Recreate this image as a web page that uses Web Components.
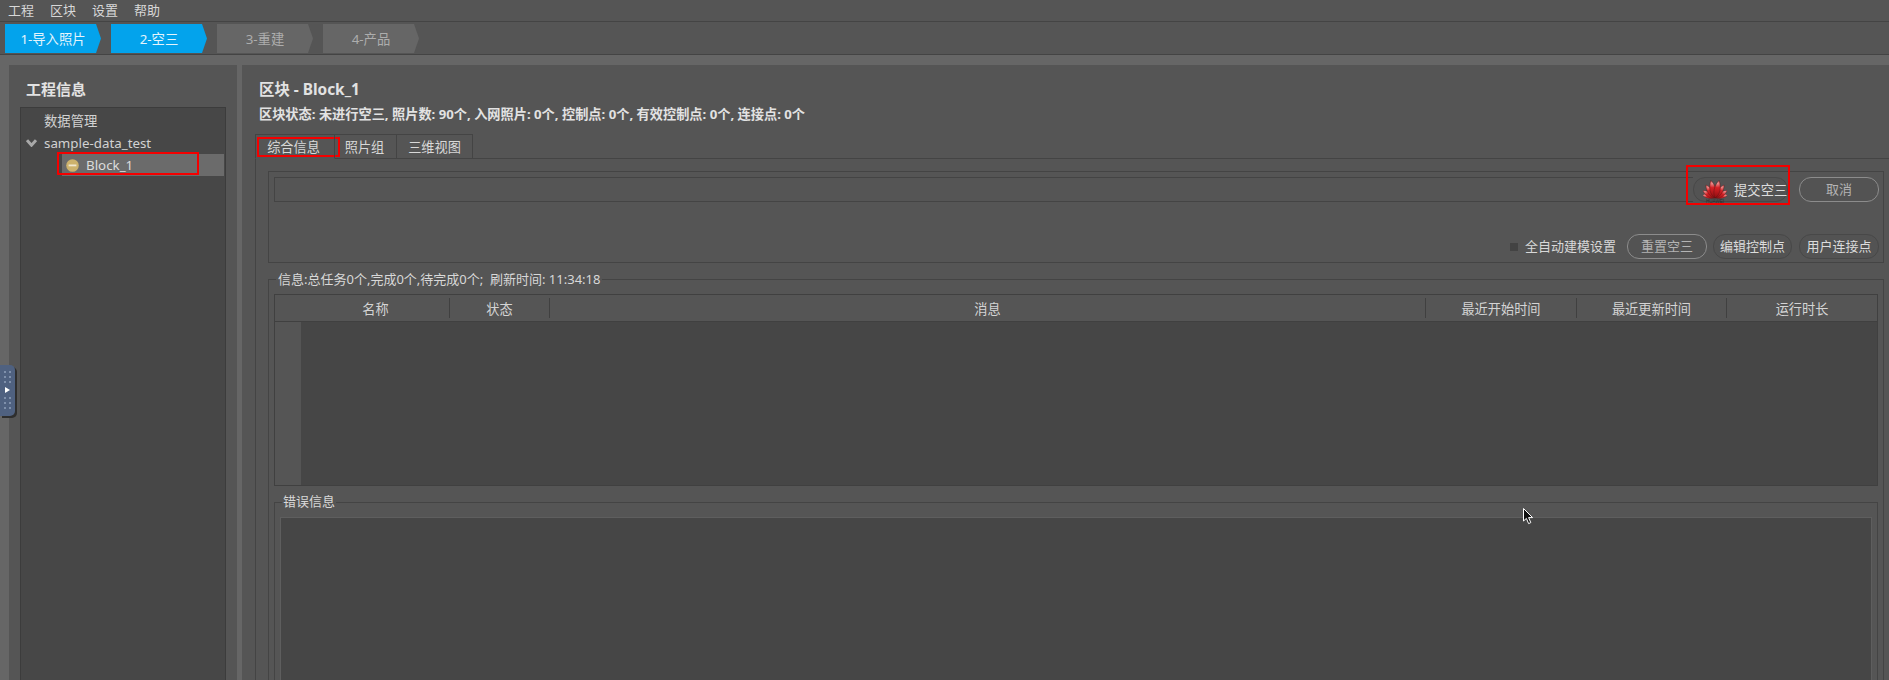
<!DOCTYPE html>
<html lang="zh-CN">
<head>
<meta charset="utf-8">
<title>工程</title>
<style>
  html, body { margin: 0; height: 100%; overflow: hidden; background: #666; }
  body { font: 13px/1.2 "Noto Sans", "Noto Sans CJK SC", sans-serif; color: #d6d6d6; }
</style>
</head>
<body>
<app-shell>
  <menu-bar>
    <span>工程</span><span>区块</span><span>设置</span><span>帮助</span>
  </menu-bar>
  <step-bar>
    <step-item active>1-导入照片</step-item>
    <step-item active>2-空三</step-item>
    <step-item>3-重建</step-item>
    <step-item>4-产品</step-item>
  </step-bar>
  <main-area>
    <side-panel>
      <tree-row>数据管理</tree-row>
      <tree-row expanded>sample-data_test</tree-row>
      <tree-row block selected>Block_1</tree-row>
    </side-panel>
    <block-panel>
      <tab-view>
        <task-box></task-box>
        <group-box label="信息:总任务0个,完成0个,待完成0个;&nbsp; 刷新时间: 11:34:18">
          <task-table></task-table>
          <group-box class="errors" label="错误信息" inner>
            <dark-box></dark-box>
          </group-box>
        </group-box>
      </tab-view>
    </block-panel>
  </main-area>
  <red-mark style="left:57px;top:152px;width:142px;height:23px"></red-mark>
  <red-mark style="left:257px;top:137px;width:83px;height:20px"></red-mark>
  <red-mark style="left:1686px;top:165px;width:104px;height:40px"></red-mark>
  <dock-handle></dock-handle>
  <mouse-cursor></mouse-cursor>
</app-shell>

<script>
class AppShell extends HTMLElement {
  constructor() {
    super();
    this.attachShadow({ mode: 'open' }).innerHTML = `
      <style>
        :host {
          display: flex;
          flex-direction: column;
          position: relative;
          width: 1889px;
          height: 680px;
          overflow: hidden;
          background: #666;
        }
      </style>
      <slot></slot>
    `;
  }
}

class MenuBar extends HTMLElement {
  constructor() {
    super();
    this.attachShadow({ mode: 'open' }).innerHTML = `
      <style>
        :host {
          display: flex;
          align-items: center;
          gap: 16px;
          flex: none;
          height: 21px;
          padding-left: 8px;
          background: #555;
          border-bottom: 1px solid #444;
          color: #d8d8d8;
        }
      </style>
      <slot></slot>
    `;
  }
}

class StepBar extends HTMLElement {
  constructor() {
    super();
    this.attachShadow({ mode: 'open' }).innerHTML = `
      <style>
        :host {
          display: flex;
          gap: 10px;
          flex: none;
          height: 33px;
          padding: 2px 0 0 5px;
          box-sizing: border-box;
          background: #555;
          border-bottom: 1px solid #444;
        }
      </style>
      <slot></slot>
    `;
  }
}

class StepItem extends HTMLElement {
  constructor() {
    super();
    this.attachShadow({ mode: 'open' }).innerHTML = `
      <style>
        :host {
          display: flex;
          align-items: center;
          justify-content: center;
          box-sizing: border-box;
          width: 96px;
          height: 29px;
          padding-top: 1px;
          font-size: 13.33px;
          background: #666;
          color: #adadad;
          clip-path: polygon(0 0, 91px 0, 96px 14.5px, 91px 29px, 0 29px);
        }
        :host([active]) {
          background: #03a3ec;
          color: #e4f4fc;
        }
      </style>
      <slot></slot>
    `;
  }
}

class MainArea extends HTMLElement {
  constructor() {
    super();
    this.attachShadow({ mode: 'open' }).innerHTML = `
      <style>
        :host {
          display: flex;
          flex: 1;
          min-height: 0;
          gap: 5px;
          padding: 10px 0 0 9px;
        }
      </style>
      <slot></slot>
    `;
  }
}

class SidePanel extends HTMLElement {
  constructor() {
    super();
    this.attachShadow({ mode: 'open' }).innerHTML = `
      <style>
        :host {
          display: flex;
          flex-direction: column;
          flex: none;
          width: 228px;
          box-sizing: border-box;
          padding: 13px 11px 0;
          background: #555;
        }
        h2 {
          margin: 0 0 7px 6px;
          font-size: 15px;
          line-height: 22px;
          font-weight: 700;
          color: #e2e2e2;
        }
        #tree {
          flex: 1;
          padding-top: 2px;
          background: #474747;
          border: 1px solid #3c3c3c;
          border-bottom: 0;
        }
      </style>
      <h2>工程信息</h2>
      <div id="tree"><slot></slot></div>
    `;
  }
}

class TreeRow extends HTMLElement {
  constructor() {
    super();
    const arrow = this.hasAttribute('expanded')
      ? `<svg width="11" height="8" viewBox="0 0 11 8"><path d="M1 1.2 L5.5 6.2 L10 1.2" fill="none" stroke="#a8a8a8" stroke-width="3"/></svg>`
      : '';
    const status = this.hasAttribute('block')
      ? `<svg width="13" height="13" viewBox="0 0 13 13"><circle cx="6.5" cy="6.5" r="6.3" fill="#cdb26c"/><rect x="2.6" y="5.5" width="7.8" height="1.8" fill="#f1e8cf"/></svg>`
      : '';
    this.attachShadow({ mode: 'open' }).innerHTML = `
      <style>
        :host {
          display: flex;
          align-items: center;
          height: 22px;
          padding-left: 23px;
          font-size: 13.33px;
          color: #d2d2d2;
        }
        :host([expanded]) { padding-left: 5px; }
        #arrow { display: flex; width: 18px; }
        #text { margin-top: -1px; }
        :host([block]) {
          margin-left: 41px;
          padding-left: 4px;
          gap: 7px;
          margin-right: 1px;
          background: #6b6b6b;
          color: #dcdcdc;
        }
        svg { display: block; flex: none; }
      </style>
      ${arrow ? `<span id="arrow">${arrow}</span>` : ''}${status}<span id="text"><slot></slot></span>
    `;
  }
}

class BlockPanel extends HTMLElement {
  constructor() {
    super();
    this.attachShadow({ mode: 'open' }).innerHTML = `
      <style>
        :host {
          display: flex;
          flex-direction: column;
          flex: 1;
          min-width: 0;
          box-sizing: border-box;
          padding: 14px 0 0 13px;
          background: #555;
        }
        h2 {
          margin: 0 0 2px 4px;
          font-size: 15.4px;
          line-height: 22px;
          color: #e2e2e2;
        }
        p {
          margin: 0 0 9px 4px;
          font-size: 13.2px;
          line-height: 22px;
          font-weight: 700;
          color: #e2e2e2;
          white-space: nowrap;
        }
      </style>
      <h2>区块 - Block_1</h2>
      <p>区块状态: 未进行空三, 照片数: 90个, 入网照片: 0个, 控制点: 0个, 有效控制点: 0个, 连接点: 0个</p>
      <slot></slot>
    `;
  }
}

class TabView extends HTMLElement {
  constructor() {
    super();
    this.attachShadow({ mode: 'open' }).innerHTML = `
      <style>
        :host {
          display: flex;
          flex-direction: column;
          flex: 1;
          min-height: 0;
        }
        #tabs { display: flex; height: 25px; flex: none; position: relative; z-index: 1; }
        .tab {
          display: flex;
          align-items: center;
          justify-content: center;
          box-sizing: border-box;
          height: 25px;
          padding-top: 3px;
          font-size: 13.2px;
          border: 1px solid #444;
          border-left: 0;
          border-bottom: 1px solid #444;
          color: #d8d8d8;
        }
        .tab.first {
          width: 80px;
          padding-right: 3px;
          border-left: 1px solid #444;
          border-bottom-color: #555;
        }
        #pane {
          flex: 1;
          min-height: 0;
          margin-top: -1px;
          padding: 12px 0 0 12px;
          padding-right: 5px;
          border-top: 1px solid #444;
          border-left: 1px solid #444;
        }
      </style>
      <div id="tabs">
        <div class="tab first">综合信息</div>
        <div class="tab" style="width:62px;padding-right:2px">照片组</div>
        <div class="tab" style="width:76px">三维视图</div>
      </div>
      <div id="pane"><slot></slot></div>
    `;
  }
}

class TaskBox extends HTMLElement {
  constructor() {
    super();
    this.attachShadow({ mode: 'open' }).innerHTML = `
      <style>
        :host {
          display: flex;
          flex-direction: column;
          justify-content: space-between;
          box-sizing: border-box;
          height: 92px;
          margin-bottom: 16px;
          padding: 5px 4px 3px 5px;
          border: 1px solid #444;
        }
        .row { display: flex; align-items: center; }
        #progress {
          flex: 1;
          height: 25px;
          box-sizing: border-box;
          border: 1px solid #444;
          border-right: 0;
        }
        #submit {
          width: 95px;
          margin-right: 11px;
          justify-content: flex-start;
          padding-left: 9px;
          font-size: 13.33px;
        }
        #cancel, #reset, #link { width: 80px; }
        #edit { width: 79px; margin: 0 7px 0 6px; }
        #tools { justify-content: flex-end; }
        #check {
          width: 8px;
          height: 8px;
          background: #434343;
          margin-right: 7px;
        }
        #auto { margin-right: 11px; color: #d8d8d8; }
        #logo { display: block; flex: none; margin-right: 7px; margin-top: 1px; }
      </style>
      <div class="row">
        <div id="progress"></div>
        <push-btn id="submit">
          <svg id="logo" width="24" height="24" viewBox="-12 -19 24 24">
            <defs>
              <radialGradient id="petal" gradientUnits="userSpaceOnUse" cx="0" cy="-15" r="15">
                <stop offset="0" stop-color="#ee9a98"/>
                <stop offset=".3" stop-color="#d42024"/>
                <stop offset="1" stop-color="#8e0d10"/>
              </radialGradient>
              <path id="leaf" d="M0 0 C-4.6 -4 -4.6 -12 -1 -18 C3.4 -12 3 -4 0 0 Z" fill="url(#petal)" stroke="#4c1416" stroke-width=".35"/>
            </defs>
            <use href="#leaf" transform="translate(0 -1) rotate(-78) scale(.72)"/>
            <use href="#leaf" transform="translate(0 -1) rotate(78) scale(-.72 .72)"/>
            <use href="#leaf" transform="rotate(-55) scale(.8)"/>
            <use href="#leaf" transform="rotate(55) scale(-.8 .8)"/>
            <use href="#leaf" transform="rotate(-32) scale(.88)"/>
            <use href="#leaf" transform="rotate(32) scale(-.88 .88)"/>
            <use href="#leaf" transform="rotate(-10)"/>
            <use href="#leaf" transform="rotate(10) scale(-1 1)"/>
            <text x="0" y="4.8" text-anchor="middle" font-size="4.6" font-family="Liberation Sans, sans-serif" fill="#2c2c2c">HUAWEI</text>
          </svg>
          提交空三
        </push-btn>
        <push-btn id="cancel" outlined>取消</push-btn>
      </div>
      <div class="row" id="tools">
        <div id="check"></div>
        <div id="auto">全自动建模设置</div>
        <push-btn id="reset" outlined>重置空三</push-btn>
        <push-btn id="edit">编辑控制点</push-btn>
        <push-btn id="link">用户连接点</push-btn>
      </div>
    `;
  }
}

class PushBtn extends HTMLElement {
  constructor() {
    super();
    this.attachShadow({ mode: 'open' }).innerHTML = `
      <style>
        :host {
          display: flex;
          align-items: center;
          justify-content: center;
          flex: none;
          box-sizing: border-box;
          height: 25px;
          padding-top: 1px;
          border: 1px solid #484848;
          border-radius: 12px;
          background: #535353;
          color: #dcdcdc;
          white-space: nowrap;
        }
        :host([outlined]) {
          border-color: #8c8c8c;
          color: #b4b4b4;
        }
      </style>
      <slot></slot>
    `;
  }
}

class GroupBox extends HTMLElement {
  constructor() {
    super();
    this.attachShadow({ mode: 'open' }).innerHTML = `
      <style>
        :host {
          display: flex;
          flex-direction: column;
          position: relative;
          box-sizing: border-box;
          height: 420px;
          padding: 14px 5px 0;
          border: 1px solid #444;
          border-bottom: 0;
        }
        :host([inner]) {
          flex: 1;
          height: auto;
          margin-top: 16px;
          padding: 14px 5px 0 5px;
        }
        #label {
          position: absolute;
          left: 7px;
          top: -10px;
          padding: 0 2px;
          line-height: 18px;
          background: #555;
          color: #d8d8d8;
          white-space: nowrap;
        }
        :host([inner]) #label { left: 7px; top: -11px; padding: 0 1px; }
      </style>
      <div id="label">${this.getAttribute('label')}</div>
      <slot></slot>
    `;
  }
}

class TaskTable extends HTMLElement {
  constructor() {
    super();
    const heads = [
      ['名称', 148], ['状态', 100], ['消息', 876],
      ['最近开始时间', 151], ['最近更新时间', 150], ['运行时长', 150]
    ];
    this.attachShadow({ mode: 'open' }).innerHTML = `
      <style>
        :host {
          display: flex;
          flex-direction: column;
          flex: none;
          box-sizing: border-box;
          height: 192px;
          border: 1px solid #404040;
        }
        #head {
          display: flex;
          flex: none;
          height: 27px;
          box-sizing: border-box;
          padding-left: 27px;
          border-bottom: 1px solid #404040;
        }
        .cell {
          display: flex;
          align-items: center;
          justify-content: center;
          flex: none;
          box-sizing: border-box;
          margin: 3px 0 3px;
          padding-top: 4px;
          font-size: 13.2px;
          border-right: 1px solid #404040;
          color: #d4d4d4;
        }
        .cell:last-child { border-right: 0; }
        #body {
          flex: 1;
          margin-left: 26px;
          background: #464646;
        }
      </style>
      <div id="head">
        ${heads.map(([t, w]) => `<div class="cell" style="width:${w}px">${t}</div>`).join('')}
      </div>
      <div id="body"></div>
    `;
  }
}

class DarkBox extends HTMLElement {
  constructor() {
    super();
    this.attachShadow({ mode: 'open' }).innerHTML = `
      <style>
        :host {
          display: block;
          flex: 1;
          background: #464646;
          border: 1px solid #5e5e5e;
          border-bottom: 0;
        }
      </style>
    `;
  }
}

class RedMark extends HTMLElement {
  constructor() {
    super();
    this.attachShadow({ mode: 'open' }).innerHTML = `
      <style>
        :host {
          position: absolute;
          box-sizing: border-box;
          border: 2px solid #f40000;
          pointer-events: none;
        }
      </style>
    `;
  }
}

class DockHandle extends HTMLElement {
  constructor() {
    super();
    this.attachShadow({ mode: 'open' }).innerHTML = `
      <style>
        :host {
          position: absolute;
          left: 0;
          top: 365px;
          width: 15px;
          height: 51px;
          background: #4f6180;
          border-radius: 0 5px 5px 0;
          box-shadow: 2px 2px 0 #2e2e2e;
        }
        svg { display: block; }
      </style>
      <svg width="15" height="51" viewBox="0 0 15 51">
        <g fill="#7f90ab">
          <rect x="4" y="6" width="2" height="2"/><rect x="9" y="6" width="2" height="2"/>
          <rect x="4" y="11" width="2" height="2"/><rect x="9" y="11" width="2" height="2"/>
          <rect x="4" y="16" width="2" height="2"/><rect x="9" y="16" width="2" height="2"/>
          <rect x="4" y="32" width="2" height="2"/><rect x="9" y="32" width="2" height="2"/>
          <rect x="4" y="37" width="2" height="2"/><rect x="9" y="37" width="2" height="2"/>
          <rect x="4" y="42" width="2" height="2"/><rect x="9" y="42" width="2" height="2"/>
        </g>
        <path d="M5 22 L10 25 L5 28 Z" fill="#fff"/>
      </svg>
    `;
  }
}

class MouseCursor extends HTMLElement {
  constructor() {
    super();
    this.attachShadow({ mode: 'open' }).innerHTML = `
      <style>
        :host { position: absolute; left: 1523px; top: 508px; width: 11px; height: 17px; }
        svg { display: block; }
      </style>
      <svg width="11" height="17" viewBox="0 0 11 17">
        <path d="M.5 .5 V13 L3.4 10.4 L5.6 15.6 L7.8 14.6 L5.6 9.6 H9.6 Z" fill="#111" stroke="#fff" stroke-width="1"/>
      </svg>
    `;
  }
}

customElements.define('app-shell', AppShell);
customElements.define('menu-bar', MenuBar);
customElements.define('step-bar', StepBar);
customElements.define('step-item', StepItem);
customElements.define('main-area', MainArea);
customElements.define('side-panel', SidePanel);
customElements.define('tree-row', TreeRow);
customElements.define('block-panel', BlockPanel);
customElements.define('tab-view', TabView);
customElements.define('task-box', TaskBox);
customElements.define('push-btn', PushBtn);
customElements.define('group-box', GroupBox);
customElements.define('task-table', TaskTable);
customElements.define('dark-box', DarkBox);
customElements.define('red-mark', RedMark);
customElements.define('dock-handle', DockHandle);
customElements.define('mouse-cursor', MouseCursor);
</script>
</body>
</html>
